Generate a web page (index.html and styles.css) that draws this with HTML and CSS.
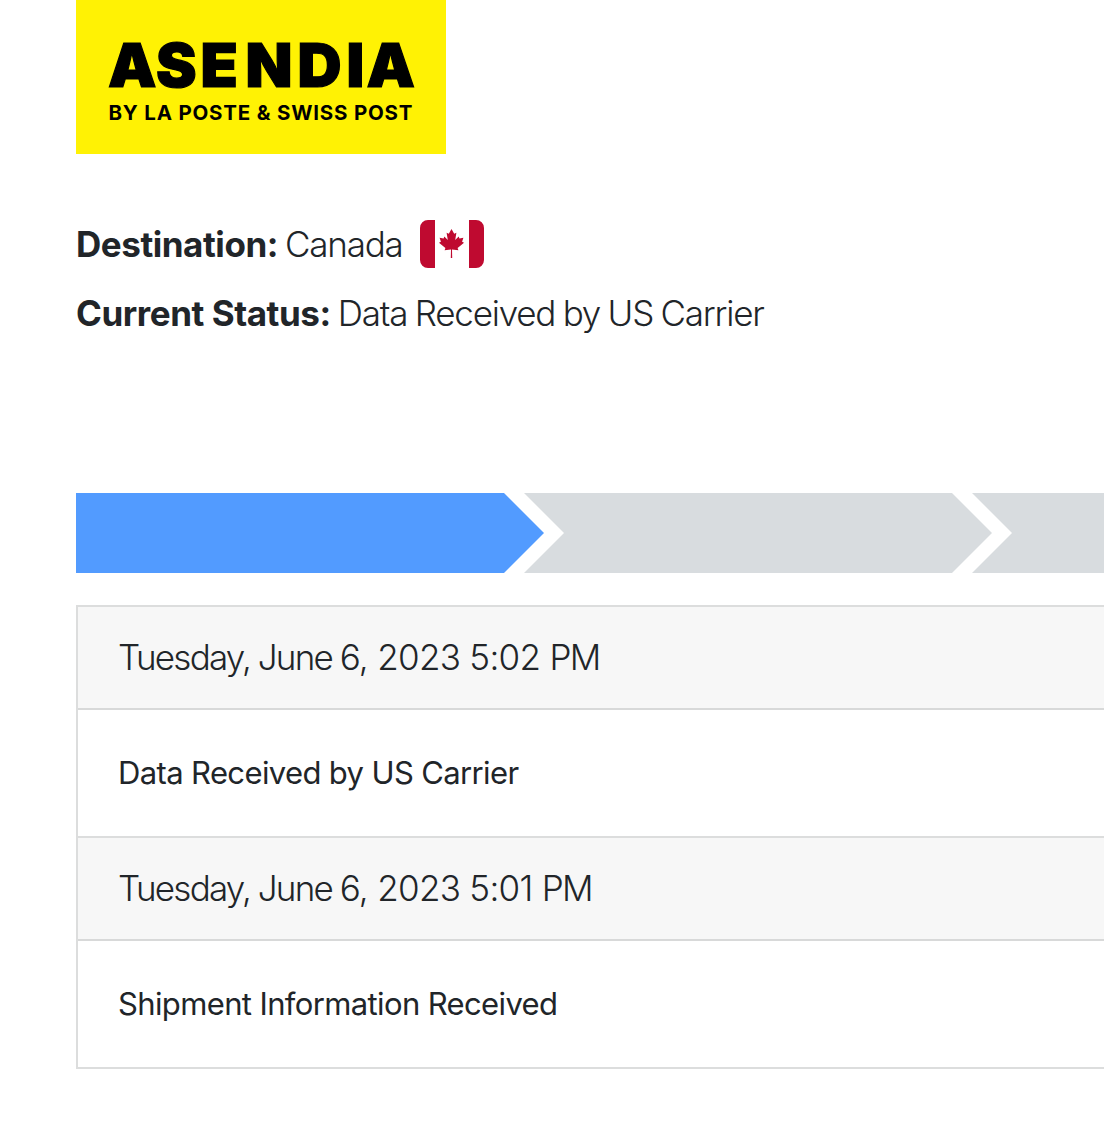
FILE: index.html
```html
<!DOCTYPE html>
<html lang="en">
<head>
    <meta charset="UTF-8">
    <meta name="viewport" content="width=device-width, initial-scale=1.0">
    <title>Asendia Tracking</title>
    <link rel="stylesheet" href="styles.css">
</head>
<body>

<div class="container">
    <svg class="logo" viewBox="0 0 370 154" role="img" aria-label="Asendia by La Poste &amp; Swiss Post">
        <rect width="370" height="154" fill="#fff204"/>
        <text class="logo-name" y="87" x="32 80 124.5 169.5 221.5 270.5 290.5">ASENDIA</text>
        <text class="logo-tagline" x="32.5" y="119.5" textLength="304" lengthAdjust="spacing">BY LA POSTE &amp; SWISS POST</text>
    </svg>

    <div class="summary">
        <p class="lead">
            <strong class="label">Destination:</strong>
            <span class="value">Canada</span>
            <svg class="flag" viewBox="0 0 64 48" aria-label="Canada">
                <path fill="#bf0a30" d="M15 0H8a8 8 0 0 0-8 8v32a8 8 0 0 0 8 8h7zM49 0h7a8 8 0 0 1 8 8v32a8 8 0 0 1-8 8h-7z"/>
                <path fill="#bf0a30" d="M31.5 9l-2.7 4.8-2.2-1.1 1.2 7.2-3.5-3.4-.7 1.9-4-.7 1.3 4-1.9 1 6.4 5.2-.8 2.4 6.4-.9-.2 8.6h1.4l-.2-8.6 6.4.9-.8-2.4 6.4-5.2-1.9-1 1.3-4-4 .7-.7-1.9-3.5 3.4 1.2-7.2-2.2 1.1z"/>
            </svg>
        </p>
        <p class="lead">
            <strong class="label">Current Status:</strong>
            <span class="value">Data Received by US Carrier</span>
        </p>
    </div>

    <div class="progress-steps">
        <div class="step active"></div>
        <div class="step"></div>
        <div class="step"></div>
    </div>

    <div class="events">
        <div class="event-date"><span class="day">Tuesday, June </span>6, 2023 5:02 <span class="period">PM</span></div>
        <div class="event-text">Data Received by US Carrier</div>
        <div class="event-date"><span class="day">Tuesday, June </span>6, 2023 5:01 <span class="period">PM</span></div>
        <div class="event-text">Shipment Information Received</div>
    </div>
</div>

</body>
</html>
```
FILE: styles.css
```css
* {
    box-sizing: border-box;
}
body {
    margin: 0;
    background-color: #fff;
    color: #212529;
    font-family: Inter, "Liberation Sans", sans-serif;
}
.container {
    padding-left: 76px;
}
.logo {
    display: block;
    width: 370px;
    height: 154px;
}
.logo-name {
    font-size: 61px;
    font-weight: 900;
    stroke: #000;
    stroke-width: 1.2px;
}
.logo-tagline {
    font-size: 20.5px;
    font-weight: 700;
}
.summary {
    padding-top: 63px;
}
.lead {
    display: flex;
    align-items: center;
    gap: 8px;
    height: 54px;
    margin: 0 0 15px;
    font-size: 35px;
    font-weight: 300;
    white-space: nowrap;
}
.label {
    font-weight: 700;
    letter-spacing: -0.45px;
}
.value {
    margin-left: -1px;
    letter-spacing: -1.2px;
    word-spacing: -1.2px;
}
.flag {
    width: 64px;
    height: 48px;
    margin-left: 9px;
}
.progress-steps {
    display: flex;
    margin-top: 153px;
    overflow: hidden;
}
.step {
    flex: none;
    width: 468px;
    height: 80px;
    margin-right: -20px;
    background-color: #d8dcdf;
    clip-path: polygon(0 0, 428px 0, 100% 50%, 428px 100%, 0 100%, 40px 50%);
}
.step:first-child {
    clip-path: polygon(0 0, 428px 0, 100% 50%, 428px 100%, 0 100%);
}
.step:last-child {
    flex: 0 1 468px;
    margin-right: 0;
    clip-path: polygon(0 0, 100% 0, 100% 100%, 0 100%, 40px 50%);
}
.step.active {
    background-color: #529bff;
}
.events {
    margin-top: 32px;
    border: 2px solid #dcdddd;
    border-right: 0;
}
.event-date,
.event-text {
    padding-left: 40px;
    white-space: nowrap;
}
.event-date {
    height: 103px;
    line-height: 101px;
    background-color: #f7f7f7;
    border-bottom: 2px solid #d8d9d9;
    font-size: 35px;
    font-weight: 300;
    letter-spacing: -0.7px;
}
.day {
    letter-spacing: -1.75px;
    word-spacing: -0.5px;
}
.period {
    letter-spacing: -1.7px;
}
.event-text {
    height: 128px;
    line-height: 125px;
    font-size: 31px;
    font-weight: 400;
    letter-spacing: -0.63px;
    border-bottom: 2px solid #dcdddd;
}
.event-text:last-child {
    height: 126px;
    border-bottom: 0;
}
```
